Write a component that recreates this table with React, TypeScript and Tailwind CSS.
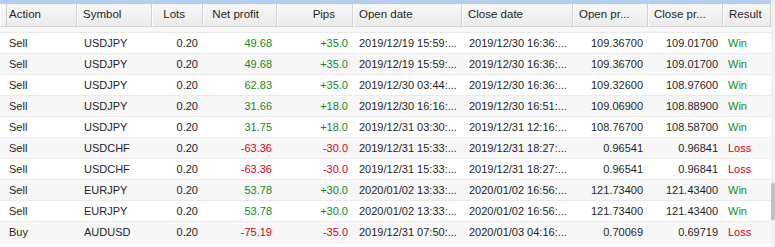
import React from 'react';

type Trade = {
  action: string;
  symbol: string;
  lots: string;
  profit: string;
  pips: string;
  openDate: string;
  closeDate: string;
  openPrice: string;
  closePrice: string;
  win: boolean;
};

const trades: Trade[] = [
  { action: 'Sell', symbol: 'USDJPY', lots: '0.20', profit: '49.68', pips: '+35.0', openDate: '2019/12/19 15:59:...', closeDate: '2019/12/30 16:36:...', openPrice: '109.36700', closePrice: '109.01700', win: true },
  { action: 'Sell', symbol: 'USDJPY', lots: '0.20', profit: '49.68', pips: '+35.0', openDate: '2019/12/19 15:59:...', closeDate: '2019/12/30 16:36:...', openPrice: '109.36700', closePrice: '109.01700', win: true },
  { action: 'Sell', symbol: 'USDJPY', lots: '0.20', profit: '62.83', pips: '+35.0', openDate: '2019/12/30 03:44:...', closeDate: '2019/12/30 16:36:...', openPrice: '109.32600', closePrice: '108.97600', win: true },
  { action: 'Sell', symbol: 'USDJPY', lots: '0.20', profit: '31.66', pips: '+18.0', openDate: '2019/12/30 16:16:...', closeDate: '2019/12/30 16:51:...', openPrice: '109.06900', closePrice: '108.88900', win: true },
  { action: 'Sell', symbol: 'USDJPY', lots: '0.20', profit: '31.75', pips: '+18.0', openDate: '2019/12/31 03:30:...', closeDate: '2019/12/31 12:16:...', openPrice: '108.76700', closePrice: '108.58700', win: true },
  { action: 'Sell', symbol: 'USDCHF', lots: '0.20', profit: '-63.36', pips: '-30.0', openDate: '2019/12/31 15:33:...', closeDate: '2019/12/31 18:27:...', openPrice: '0.96541', closePrice: '0.96841', win: false },
  { action: 'Sell', symbol: 'USDCHF', lots: '0.20', profit: '-63.36', pips: '-30.0', openDate: '2019/12/31 15:33:...', closeDate: '2019/12/31 18:27:...', openPrice: '0.96541', closePrice: '0.96841', win: false },
  { action: 'Sell', symbol: 'EURJPY', lots: '0.20', profit: '53.78', pips: '+30.0', openDate: '2020/01/02 13:33:...', closeDate: '2020/01/02 16:56:...', openPrice: '121.73400', closePrice: '121.43400', win: true },
  { action: 'Sell', symbol: 'EURJPY', lots: '0.20', profit: '53.78', pips: '+30.0', openDate: '2020/01/02 13:33:...', closeDate: '2020/01/02 16:56:...', openPrice: '121.73400', closePrice: '121.43400', win: true },
  { action: 'Buy', symbol: 'AUDUSD', lots: '0.20', profit: '-75.19', pips: '-35.0', openDate: '2019/12/31 07:50:...', closeDate: '2020/01/03 04:16:...', openPrice: '0.70069', closePrice: '0.69719', win: false },
];

const cols = 'grid grid-cols-[3px_74px_75px_51px_74px_76px_109px_111px_75px_75px_48px]';

const headers: { label: string; right?: boolean }[] = [
  { label: '' },
  { label: 'Action' },
  { label: 'Symbol' },
  { label: 'Lots', right: true },
  { label: 'Net profit', right: true },
  { label: 'Pips', right: true },
  { label: 'Open date' },
  { label: 'Close date' },
  { label: 'Open pr...' },
  { label: 'Close pr...' },
  { label: 'Result' },
];

const App: React.FC = () => {
  return (
    <div className="flex w-[775px] h-[247px] overflow-hidden bg-white text-[11px] text-[#1e1e1e] font-['Liberation_Sans',Arial,sans-serif]">
      <div className="w-[771px] flex flex-col">
        <div className="h-[4px] bg-[#b3cdee]" />
        {/* header */}
        <div className={`${cols} h-[23px] text-[11.5px] bg-gradient-to-b from-[#f8f8f8] to-[#ebebeb] border-b border-[#d6d6d6]`}>
          {headers.map((h, i) => (
            <div
              key={i}
              className={`flex items-center border-r border-[#d2d2d2] shadow-[inset_1px_0_0_#ffffff] ${h.right ? 'justify-end pr-[17px]' : 'pl-[6px]'}`}
            >
              {h.label}
            </div>
          ))}
        </div>
        <div className="h-[6px] bg-[#f7f7f7] border-b border-[#ebebeb]" />
        {trades.map((t, i) => {
          const color = t.win ? 'text-[#138a1a]' : 'text-[#d4001a]';
          return (
            <div key={i} className={`${cols} h-[21px] border-b border-[#ebebeb] ${i % 2 === 1 ? 'bg-[#f7f7f7]' : 'bg-white'}`}>
              <div />
              <div className="flex items-center pl-[6px]">{t.action}</div>
              <div className="flex items-center pl-[7px]">{t.symbol}</div>
              <div className="flex items-center justify-end pr-[5px]">{t.lots}</div>
              <div className={`flex items-center justify-end pr-[5px] ${color}`}>{t.profit}</div>
              <div className={`flex items-center justify-end pr-[5px] ${color}`}>{t.pips}</div>
              <div className="flex items-center pl-[6px] whitespace-nowrap">{t.openDate}</div>
              <div className="flex items-center pl-[7px] whitespace-nowrap">{t.closeDate}</div>
              <div className="flex items-center justify-end pr-[5px]">{t.openPrice}</div>
              <div className="flex items-center justify-end pr-[5px]">{t.closePrice}</div>
              <div className={`flex items-center pl-[5px] ${color}`}>{t.win ? 'Win' : 'Loss'}</div>
            </div>
          );
        })}
      </div>
      {/* scrollbar */}
      <div className="w-[4px] flex flex-col bg-[#f1f1f1]">
        <div className="h-[183px]" />
        <div className="h-[37px] bg-[#c1c1c1]" />
      </div>
    </div>
  );
};

export default App;
